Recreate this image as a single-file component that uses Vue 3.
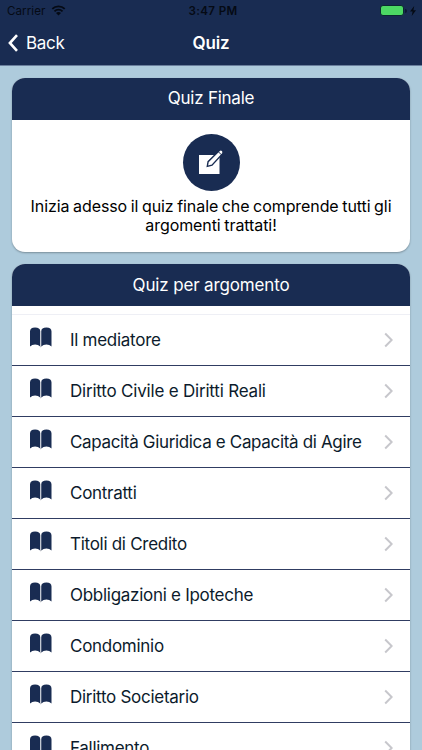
<template>
  <div class="screen">
    <header class="toolbar">
      <div class="status">
        <div class="carrier">
          <span>Carrier</span>
          <svg class="wifi" viewBox="0 0 16 12">
            <path d="M1.2 4.3a9.7 9.7 0 0 1 13.6 0M3.6 6.9a6.3 6.3 0 0 1 8.8 0" />
            <path class="dot" d="M8 11.4 5.3 8.8a3.9 3.9 0 0 1 5.4 0z" />
          </svg>
        </div>
        <span class="time">3:47 PM</span>
        <div class="power">
          <span class="battery"></span>
          <span class="cap"></span>
          <svg class="bolt" viewBox="0 0 6 10">
            <path d="M4.2 0 0 5.6h2.6L1.7 10 6 4.2H3.4z" />
          </svg>
        </div>
      </div>
      <nav class="navbar">
        <button class="back">
          <svg viewBox="0 0 10 18"><path d="M9 1.2 1.9 9 9 16.8" /></svg>
          <span>Back</span>
        </button>
        <h1>Quiz</h1>
      </nav>
    </header>

    <main class="content">
      <section class="card">
        <h2>Quiz Finale</h2>
        <div class="final">
          <button class="start">
            <svg viewBox="0 0 28 28">
              <path class="paper" d="M2 7h20.500v19H2z" />
              <path class="pencil" d="m10.300 18.400.8-4.700L22.400 2.400q1.500-1.200 3 .2 1.400 1.500.2 3L15 17.200z" />
              <path class="tip" d="m21.300 3.700 3 3" />
            </svg>
          </button>
          <p>Inizia adesso il quiz finale che comprende tutti gli<br>argomenti trattati!</p>
        </div>
      </section>

      <section class="card">
        <h2 class="wide">Quiz per argomento</h2>
        <ul class="list">
          <li v-for="topic in topics" :key="topic" class="item">
            <svg class="book" viewBox="0 0 22 21">
              <path d="M0 4.4Q0 .2 5.2.2q5.200 0 5.300 3.8v15.8Q8.400 17.700 5.200 17.700 2.100 17.700 0 19.800z" />
              <path d="M22 4.400Q22 .2 16.800.2q-5.200 0-5.300 3.800v15.800q2.100-2.100 5.300-2.100 3.100 0 5.200 2.100z" />
              <path class="spine" d="M10 19.300q1 .7 2 0l-1 1.500z" />
            </svg>
            <span class="label">{{ topic }}</span>
            <svg class="arrow" viewBox="0 0 9 16"><path d="M1.200 1.500 7.700 8l-6.500 6.500" /></svg>
          </li>
        </ul>
      </section>
    </main>
  </div>
</template>

<script setup>
const topics = [
  'Il mediatore',
  'Diritto Civile e Diritti Reali',
  'Capacità Giuridica e Capacità di Agire',
  'Contratti',
  'Titoli di Credito',
  'Obbligazioni e Ipoteche',
  'Condominio',
  'Diritto Societario',
  'Fallimento'
]
</script>

<style>
body {
  margin: 0;
  overflow: hidden;
}
</style>

<style scoped>
* {
  box-sizing: border-box;
}
.screen {
  height: 750px;
  overflow: hidden;
  background: #aecbdc;
  font-family: Inter, "Liberation Sans", sans-serif;
}
button {
  border: none;
  padding: 0;
  font-family: inherit;
  cursor: pointer;
}
svg {
  display: block;
  fill: none;
  flex: none;
}
.toolbar {
  height: 66px;
  background: #192c52;
  border-bottom: 1px solid #6a7f9d;
}
.status {
  display: grid;
  grid-template-columns: 1fr auto 1fr;
  align-items: center;
  height: 21px;
  padding: 0 6px 0 7px;
  font-size: 11.6px;
  color: #050a14;
}
.carrier {
  display: flex;
  align-items: center;
  gap: 6px;
  letter-spacing: 0.05px;
}
.wifi {
  width: 15px;
  height: 11px;
  stroke: #050a14;
  stroke-width: 2;
}
.wifi .dot {
  fill: #050a14;
  stroke: none;
}
.time {
  padding-left: 3px;
  font-weight: 600;
  letter-spacing: 0.35px;
}
.power {
  display: flex;
  align-items: center;
  justify-content: flex-end;
}
.battery {
  width: 24px;
  height: 11px;
  border: 1px solid #0a2a30;
  border-radius: 3px;
  background: #4cd964;
}
.cap {
  width: 2px;
  height: 4px;
  margin: 0 3px 0 1px;
  border-radius: 0 2px 2px 0;
  background: #0d1830;
}
.bolt {
  width: 6px;
  height: 10px;
  fill: #050a14;
}
.navbar {
  display: grid;
  grid-template-columns: 1fr auto 1fr;
  align-items: center;
  height: 43px;
  padding: 0 8px;
  color: #fff;
}
.back {
  display: flex;
  align-items: center;
  gap: 8px;
  background: none;
  color: #fff;
  font-size: 17px;
  letter-spacing: -0.3px;
}
.back svg {
  width: 10px;
  height: 18px;
  stroke: #fff;
  stroke-width: 2.6;
}
h1 {
  margin: 0;
  font-size: 17px;
  font-weight: 600;
  letter-spacing: -0.15px;
}
.content {
  padding: 12px 12px 0;
}
.card {
  margin-bottom: 12px;
  overflow: hidden;
  border-radius: 13px;
  background: #fff;
  box-shadow: 0 1px 2px rgba(0, 0, 0, 0.3);
}
h2 {
  height: 41.5px;
  margin: 0;
  background: #192c52;
  color: #fff;
  font-size: 17px;
  font-weight: 400;
  line-height: 41px;
  text-align: center;
  letter-spacing: -0.25px;
}
.wide {
  letter-spacing: -0.15px;
  line-height: 42px;
}
.final {
  height: 132.5px;
  padding-top: 14px;
}
.start {
  display: flex;
  align-items: center;
  justify-content: center;
  width: 57px;
  height: 57px;
  margin: 0 auto;
  border-radius: 50%;
  background: #192c52;
}
.start svg {
  width: 28px;
  height: 28px;
}
.paper {
  fill: #fff;
}
.pencil {
  fill: #fff;
  stroke: #192c52;
  stroke-width: 1.4;
}
.tip {
  stroke: #192c52;
  stroke-width: 1;
}
p {
  margin: 6px 0 0;
  color: #000;
  font-size: 16px;
  line-height: 19.5px;
  text-align: center;
  letter-spacing: -0.08px;
  word-spacing: -0.8px;
  white-space: nowrap;
}
.list {
  margin: 8.5px 0 0;
  padding: 0;
  border-top: 1px solid #eeeff5;
  list-style: none;
}
.item {
  display: flex;
  align-items: center;
  height: 50.93px;
  padding: 0 17px 0 18px;
  border-bottom: 1px solid #303d62;
}
.item:first-child {
  height: 51.2px;
}
.book {
  width: 21.5px;
  height: 21px;
  margin: -5px 18.5px 0 0;
  fill: #192c52;
}
.spine {
  fill: #9a9da5;
}
.label {
  flex: 1;
  color: #0c1b2c;
  font-size: 17px;
  letter-spacing: -0.28px;
  white-space: nowrap;
}
.item:nth-child(3) .label {
  letter-spacing: -0.34px;
}
.item:nth-child(2) .label {
  letter-spacing: -0.2px;
}
.arrow {
  width: 9px;
  height: 16px;
  stroke: #c7c7cc;
  stroke-width: 2;
}
</style>
